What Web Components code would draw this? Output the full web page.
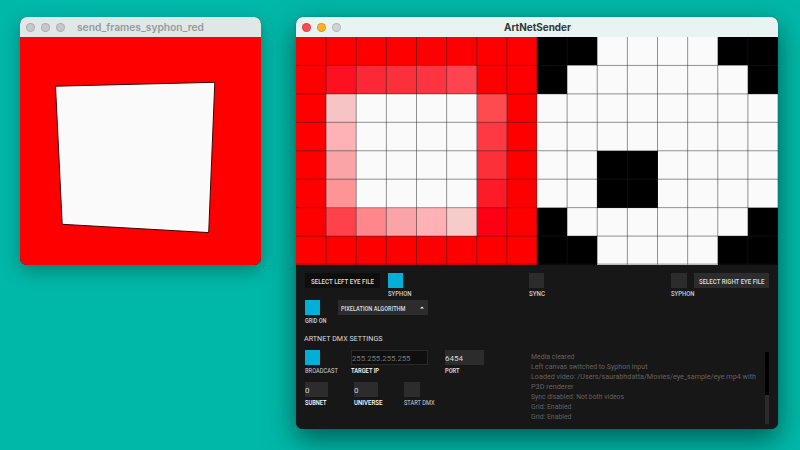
<!DOCTYPE html>
<html lang="en">
<head>
<meta charset="utf-8">
<title>ArtNetSender</title>
<style>
html,body{margin:0;height:100%;overflow:hidden;background:#00b8a8}
</style>
</head>
<body>
<desk-top></desk-top>
<script>
const make = (name, html, setup) => customElements.define(name, class extends HTMLElement {
  connectedCallback() {
    if (this.shadowRoot) return;
    const root = this.attachShadow({mode: 'open'});
    const t = document.createElement('template');
    t.innerHTML = typeof html === 'function' ? html(this) : html;
    root.append(t.content.cloneNode(true));
    if (setup) setup(root, this);
  }
});
const at = (el, n, d = '') => el.getAttribute(n) ?? d;

// A single line of text stretched to an exact width
make('fit-text', el => {
  const w = +at(el, 'w'), s = +at(el, 'size', 6.9), h = +at(el, 'h', 10);
  return `<style>:host{display:block;width:${w}px;height:${h}px;flex:none}
  svg{display:block;overflow:visible}
  text{font:${at(el, 'weight', '500')} ${s}px ${at(el, 'font', 'Roboto')},sans-serif;fill:${at(el, 'color', '#cfcfcf')}}</style>
  <svg width="${w}" height="${h}"><text x="0" y="${h / 2 + s * 0.355}" textLength="${w}" lengthAdjust="spacingAndGlyphs">${at(el, 'text')}</text></svg>`;
});

make('mac-window', el => {
  const off = el.hasAttribute('inactive');
  return `<style>
  :host{display:flex;flex-direction:column;border-radius:7px;overflow:hidden;background:#181717;
    box-shadow:${off ? '0 6px 18px rgba(0,0,0,.3)' : '0 10px 28px rgba(0,0,0,.5),0 0 2px rgba(0,0,0,.2)'}}
  header{flex:none;height:20px;box-sizing:border-box;display:flex;align-items:center;position:relative;
    background:${off ? '#e0e7e6' : '#e9f4f2'};padding-left:6px;gap:6px}
  i{width:9px;height:9px;border-radius:50%;box-sizing:border-box;border:.5px solid rgba(0,0,0,.12);background:${off ? '#c6c8c7' : '#cfd3d2'}}
  ${off ? '' : '.r{background:#fc4b50}.y{background:#fdb022}'}
  .t{position:absolute;top:0;left:${at(el, 'tx')}px}
  </style><header><i class="r"></i><i class="y"></i><i></i>
  <fit-text class="t" h="20.6" size="9.8" weight="${off ? 600 : 700}" font="Inter" color="${off ? '#969b9a' : '#313736'}" w="${at(el, 'tw')}" text="${at(el, 'name')}"></fit-text></header><slot></slot>`;
});

// Canvas holding the slanted white quad
make('quad-view', `<style>:host{display:block;height:228px;background:#fe0000}svg{display:block}</style>
<svg width="241" height="228" viewBox="20 37 241 228"><path d="M55.5 86.2 214.8 82.3 208.7 232.6 62.2 224.3Z" fill="#fafafa" stroke="#3a0808" stroke-width="1"/></svg>`);

// 8x8 pixelated canvas
make('pixel-grid', el => {
  const map = {r:'#fe0000', w:'#fafafa', k:'#000', a:'#ff1020', b:'#fc2836', c:'#fa303a', d:'#fe3540', e:'#ff4450',
    f:'#f6c4c4', g:'#feb2b5', h:'#faa4a8', i:'#ff9497', j:'#ff4a50', l:'#fe3943', m:'#fb3039', n:'#fd1b28', o:'#fe0014',
    p:'#ff414b', q:'#ff868a', s:'#f8cbcb'};
  const lines = [];
  for (let n = 1; n <= 8; n++) {
    lines.push(`<path d="M${(n * 30.125).toFixed(2)} 0V227.5M0 ${(n * 28.44 - (n == 8 ? .4 : 0)).toFixed(2)}H241"/>`);
  }
  const cells = [...at(el, 'cells').replace(/\s/g, '')].map(c => `<b style="background:${map[c]}"></b>`).join('');
  return `<style>:host{display:grid;width:241px;height:227.5px;grid-template:repeat(8,1fr)/repeat(8,1fr);position:relative}
  svg{position:absolute;inset:0}path{stroke:#202020;stroke-opacity:.48;stroke-width:1;fill:none}</style>${cells}<svg width="241" height="227.5">${lines.join('')}</svg>`;
});

// Square toggle or text field with a caption beneath
make('ui-field', el => {
  const on = el.hasAttribute('on'), w = at(el, 'w', '15.5');
  return `<style>:host{display:block;flex:none;width:${w}px}
  .b{height:15px;box-sizing:border-box;display:flex;align-items:center;background:${on ? '#00b0d6' : at(el, 'bg', '#2c2c2c')};
  ${el.hasAttribute('outlined') ? 'border:1px solid #292929;' : ''}}
  .l{margin-top:1px}</style>
  <div class="b">${at(el, 'value') ? `<fit-text size="7.6" weight="400" color="${at(el, 'vc', '#d6d6d6')}" w="${at(el, 'vw')}" text="${at(el, 'value')}"></fit-text>` : ''}</div>
  <fit-text class="l" w="${at(el, 'lw')}" text="${at(el, 'label')}" color="${at(el, 'lc', '#cfcfcf')}" weight="${at(el, 'lweight', '500')}"></fit-text>`;
});

make('ui-button', el => `<style>:host{display:flex;flex:none;align-items:center;justify-content:${el.hasAttribute('menu') ? 'space-between' : 'center'};box-sizing:border-box;height:15px;width:${at(el, 'w')}px;
  background:${at(el, 'bg', '#2c2c2c')};${el.hasAttribute('menu') ? 'padding:0 4px 0 3px' : ''}}</style>
  <fit-text size="7.4" color="#dedede" weight="500" w="${at(el, 'tw')}" text="${at(el, 'text')}"></fit-text>
  ${el.hasAttribute('menu') ? '<svg width="4" height="3"><path d="M0 2.6 2 .4 4 2.6Z" fill="#f2f2f2"/></svg>' : ''}`);

make('log-view', `<style>:host{display:flex;justify-content:space-between;width:238.5px;height:72px}
  .s{width:4px;background:linear-gradient(#000 43px,#2b2b2b 43px)}.lines{margin-top:-.8px}</style><div class="lines"></div><div class="s"></div>`, root => {
  const rows = [['Media cleared', 43.5], ['Left canvas switched to Syphon input', 116.5], ['Loaded video: /Users/saurabhdatta/Movies/eye_sample/eye.mp4 with', 225],
    ['P3D renderer', 42.5], ['Sync disabled: Not both videos', 93], ['Grid: Enabled', 40.5], ['Grid: Enabled', 40.5]];
  root.querySelector('.lines').innerHTML = rows.map(([t, w]) => `<fit-text size="7.3" weight="400" color="#626262" w="${w}" text="${t}"></fit-text>`).join('');
});

make('control-panel', `<style>
  :host{display:block;height:164px;box-sizing:border-box;padding:8.5px 9px 0 8.5px;background:#181717}
  .row{display:flex;height:27px}
  .split{justify-content:space-between}
  .main{display:flex;justify-content:space-between}
  .head{margin:7px 0 6px -.5px}
  .gap{height:32px}
  log-view{margin-top:51.5px}
  .top>div{display:flex}
  </style>
  <div class="row top split">
    <div style="gap:8px"><ui-button w="75" tw="63" bg="#0e0e0e" text="SELECT LEFT EYE FILE"></ui-button><ui-field on label="SYPHON" lw="23.5"></ui-field></div>
    <ui-field label="SYNC" lw="16" style="margin-right:1px"></ui-field>
    <div style="gap:7.5px"><ui-field label="SYPHON" lw="23.5"></ui-field><ui-button w="75" tw="65.5" text="SELECT RIGHT EYE FILE"></ui-button></div>
  </div>
  <div class="main">
    <div>
      <div class="row" style="gap:18px"><ui-field on label="GRID ON" lw="21.5"></ui-field><ui-button menu w="90" tw="64.5" text="PIXELATION ALGORITHM"></ui-button></div>
      <fit-text class="head" w="78.5" size="7.6" h="9" weight="400" color="#dadada" text="ARTNET DMX SETTINGS" style="margin-bottom:7px"></fit-text>
      <div class="row gap"><ui-field on label="BROADCAST" lw="33" lweight="400"></ui-field>
        <ui-field w="77" style="margin-left:31px" outlined bg="#0f0f0f" vc="#777" value="255.255.255.255" vw="58.5" label="TARGET IP" lw="28" lc="#fff"></ui-field>
        <ui-field w="39" style="margin-left:16.5px" value="6454" vw="18" label="PORT" lw="14.5" lc="#e0e0e0"></ui-field></div>
      <div class="row"><ui-field w="23.5" value="0" vw="4.5" label="SUBNET" lw="21.5" lc="#fff"></ui-field>
        <ui-field w="24" style="margin-left:26px" value="0" vw="4.5" label="UNIVERSE" lw="28.5" lc="#fff"></ui-field>
        <ui-field style="margin-left:26px" label="START DMX" lw="30.5" lweight="400"></ui-field></div>
    </div>
    <log-view></log-view>
  </div>`);

make('desk-top', `<style>
  :host{display:block;position:relative;width:800px;height:450px;overflow:hidden;background:#00b8a8}
  mac-window{position:absolute;top:17px}
  .a{left:20px;width:241px;height:248px}
  .b{left:296px;width:482px;height:411.5px}
  .eyes{display:flex;flex:none}
  </style>
  <mac-window class="a" inactive name="send_frames_syphon_red" tx="57" tw="127"><quad-view></quad-view></mac-window>
  <mac-window class="b" name="ArtNetSender" tx="207.5" tw="67"><div class="eyes">
    <pixel-grid cells="rrrrrrrr rabcderr rfwwwwjr rgwwwwlr rhwwwwmr riwwwwnr rpqhgsor rrrrrrrr"></pixel-grid>
    <pixel-grid cells="kkwwwwkk kwwwwwwk wwwwwwww wwwwwwww wwkkwwww wwkkwwww kwwwwwwk kkwwwwkk"></pixel-grid></div>
    <control-panel></control-panel></mac-window>`);
</script>
</body>
</html>
